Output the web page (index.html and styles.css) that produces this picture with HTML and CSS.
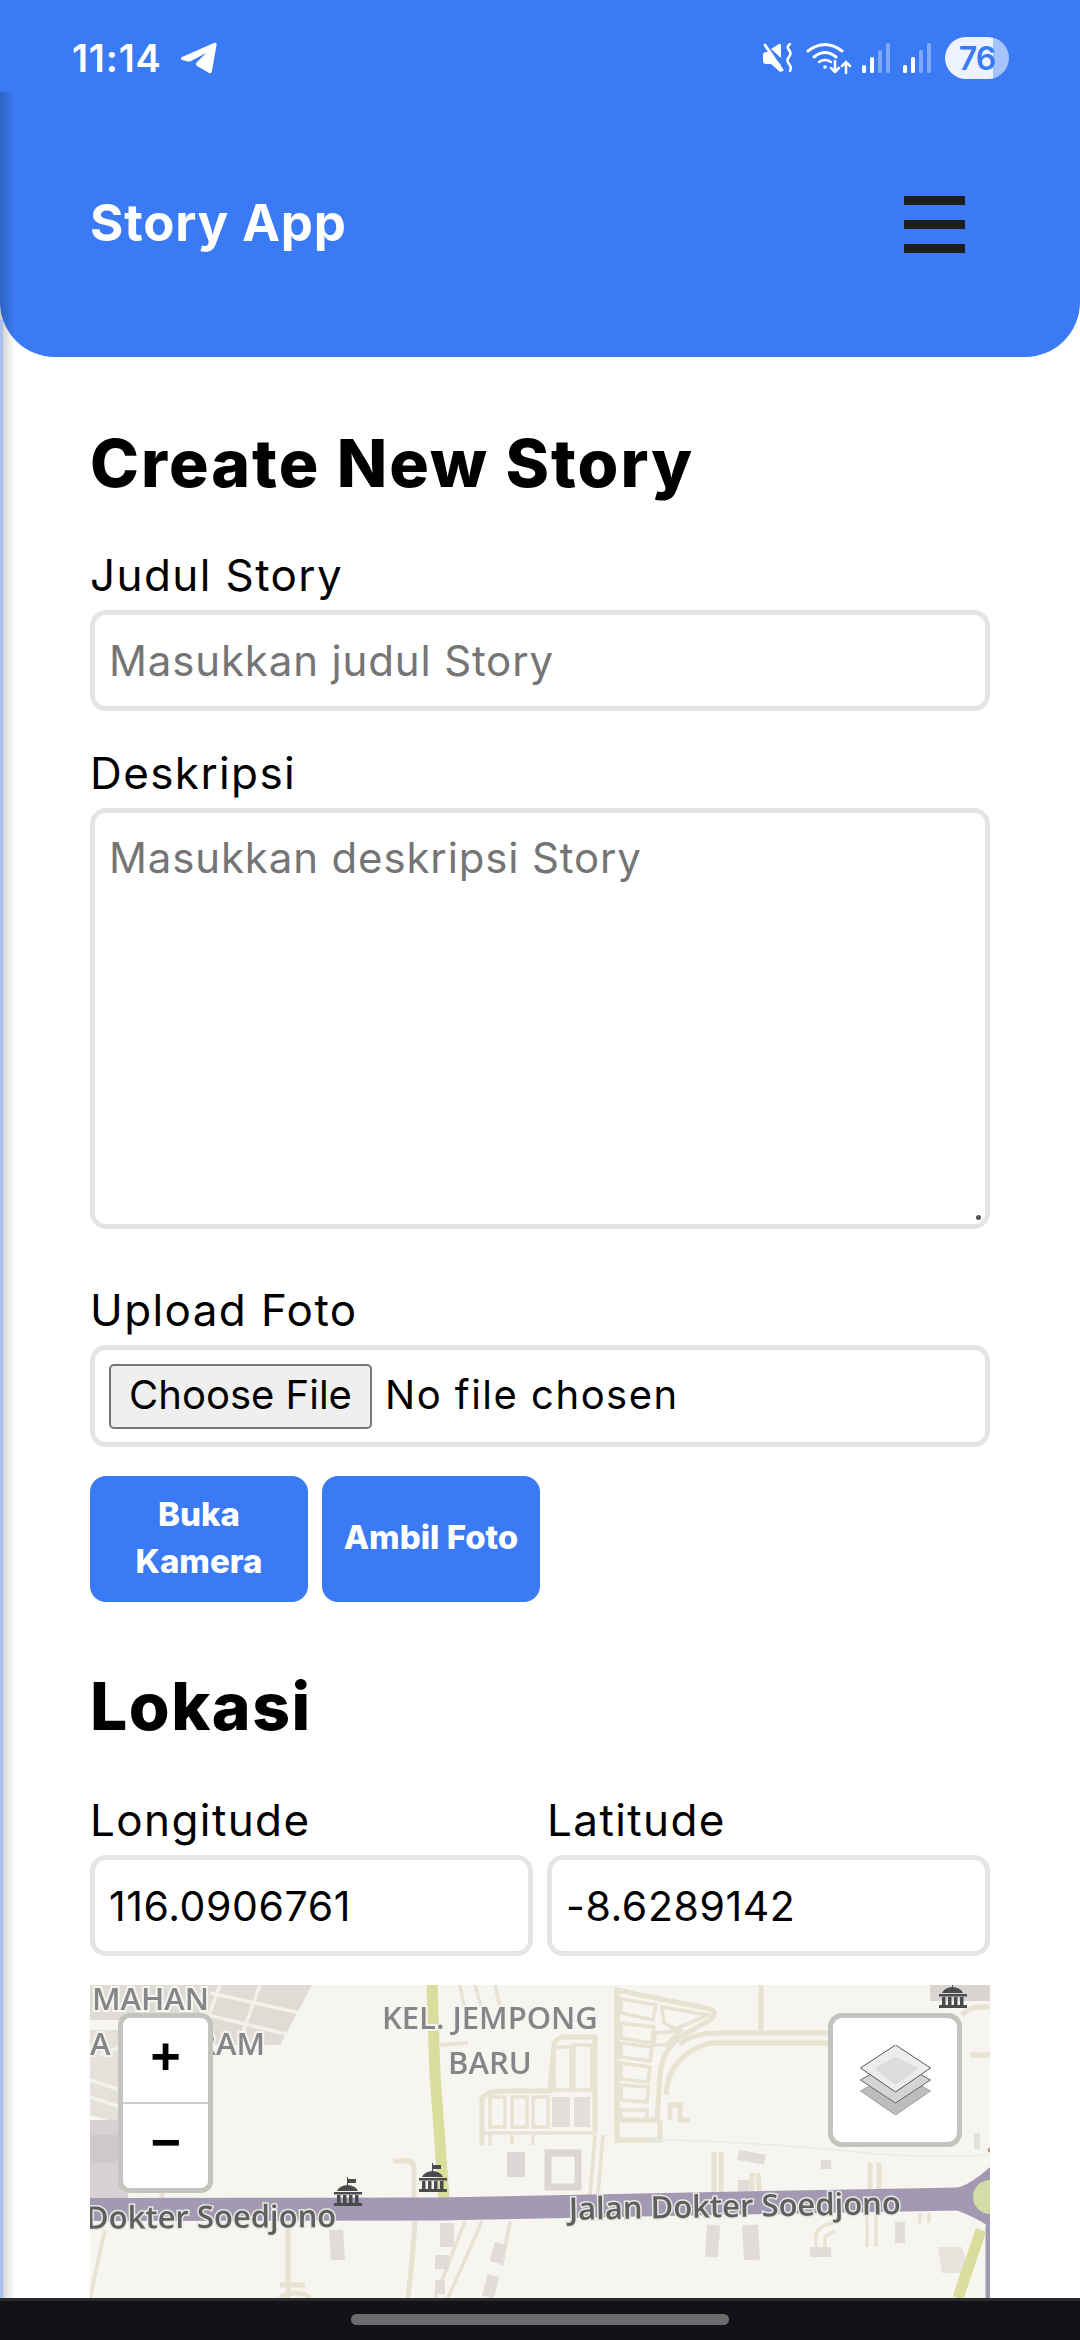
FILE: index.html
```html
<!DOCTYPE html>
<html lang="en">
<head>
  <meta charset="UTF-8">
  <meta name="viewport" content="width=device-width, initial-scale=1.0">
  <title>Story App</title>
  <link rel="stylesheet" href="styles.css">
</head>
<body>
  <header class="app-header">
    <div class="status-bar">
      <div class="status-left">
        <span class="status-time">11:14</span>
        <svg class="tg-icon" viewBox="0 0 36 32"><path d="M1 15 L33 1 Q36 0 35.500 3 L31 29 Q30.500 32 28 31 L16 24 Q14 22 16 20 L25 11 L10 19 Q8 20 5 19 L1 18 Q-1 16 1 15Z" fill="#fff"/></svg>
      </div>
      <div class="status-right">
        <svg class="mute-icon" viewBox="0 0 30 30" fill="#fff">
          <path d="M0 12 Q0 9 3 9 L5 9 L18 22 L18 28 Q18 30 16 28 L8 21 L3 21 Q0 21 0 18Z"/>
          <path d="M8 6 L16 1 Q18 0 18 2 L18 15Z"/>
          <path d="M2 2 L19 27" stroke="#fff" stroke-width="3" stroke-linecap="round"/>
          <path d="M27 1 Q23 4 26 7 Q29 10 26 14 Q23 17 26 21 Q29 24 27 28" fill="none" stroke="#fff" stroke-width="2.500" stroke-linecap="round"/>
        </svg>
        <svg class="wifi-icon" viewBox="0 0 46 32" fill="none" stroke="#fff" stroke-linecap="round">
          <path d="M2 9 Q19 -4 36 9" stroke-width="3"/>
          <path d="M8 15 Q19 6 30 15" stroke-width="3"/>
          <path d="M13 20 Q19 16 25 20" stroke-width="2.500"/>
          <circle cx="19" cy="25" r="1.800" fill="#fff" stroke="none"/>
          <path d="M29 19 V30 M25 26 L29 30 L33 26" stroke-width="2.500"/>
          <path d="M40 31 V20 M36 24 L40 20 L44 24" stroke-width="2.500"/>
        </svg>
        <svg class="signal-icon" viewBox="0 0 28 30">
          <rect x="0" y="22" width="4" height="8" rx="1.500" fill="#fff"/>
          <rect x="8" y="14" width="4" height="16" rx="1.500" fill="#fff"/>
          <rect x="16" y="7" width="4" height="23" rx="1.500" fill="#fff" fill-opacity=".35"/>
          <rect x="24" y="0" width="4" height="30" rx="1.500" fill="#fff" fill-opacity=".35"/>
        </svg>
        <svg class="signal-icon signal-two" viewBox="0 0 28 30">
          <rect x="0" y="22" width="4" height="8" rx="1.500" fill="#fff"/>
          <rect x="8" y="14" width="4" height="16" rx="1.500" fill="#fff"/>
          <rect x="16" y="7" width="4" height="23" rx="1.500" fill="#fff" fill-opacity=".35"/>
          <rect x="24" y="0" width="4" height="30" rx="1.500" fill="#fff" fill-opacity=".35"/>
        </svg>
        <div class="battery"><span class="battery-level">76</span></div>
      </div>
    </div>
    <nav class="nav-row">
      <span class="brand">Story App</span>
      <button class="menu-btn" aria-label="Menu"><i></i><i></i><i></i></button>
    </nav>
  </header>

  <main class="content">
    <h1 class="page-title">Create New Story</h1>

    <form class="story-form">
      <label class="field-label">Judul Story</label>
      <input class="field-input" type="text" placeholder="Masukkan judul Story">

      <label class="field-label">Deskripsi</label>
      <div class="area-wrap">
        <textarea class="field-input field-area" placeholder="Masukkan deskripsi Story"></textarea>
        <span class="area-grip"></span>
      </div>

      <label class="field-label label-upload">Upload Foto</label>
      <div class="field-input file-box">
        <span class="file-btn">Choose File</span>
        <span class="file-name">No file chosen</span>
      </div>

      <div class="camera-btns">
        <button type="button" class="blue-btn">Buka Kamera</button>
        <button type="button" class="blue-btn">Ambil Foto</button>
      </div>

      <h2 class="section-title">Lokasi</h2>

      <div class="coords">
        <div class="coord">
          <label class="field-label">Longitude</label>
          <input class="field-input" type="text" value="116.0906761">
        </div>
        <div class="coord">
          <label class="field-label">Latitude</label>
          <input class="field-input" type="text" value="-8.6289142">
        </div>
      </div>

      <div class="map">
        <svg class="map-tiles" viewBox="0 0 900 313">
          <defs>
            <g id="monument" fill="#4b4b4d">
              <path d="M13 0 H14 V2 H22 V6 H14 V8 Q22 9 24 14 H3 Q5 9 13 8Z"/>
              <rect x="0" y="15" width="28" height="2.500"/>
              <rect x="3" y="18" width="3.500" height="8"/>
              <rect x="9" y="18" width="3.500" height="8"/>
              <rect x="15" y="18" width="3.500" height="8"/>
              <rect x="21" y="18" width="3.500" height="8"/>
              <rect x="0" y="26" width="28" height="3"/>
            </g>
          </defs>
          <rect width="900" height="313" fill="#f6f5f0"/>

          <g class="blur">
            <!-- housing top left -->
            <path d="M0 0 H222 L190 60 L110 60 L40 35 L0 35Z" fill="#dedcd4"/>
            <path d="M0 45 H60 L120 85 L110 160 L0 130Z" fill="#e4e2d8"/>
            <path d="M130 0 L110 55 M170 0 L150 55 M120 8 L210 28 M110 28 L200 50 M10 70 L60 50 M0 95 L105 130 M0 112 L100 145" class="road-pale"/>
            <rect x="0" y="135" width="38" height="78" fill="#d5d2d1"/>
            <rect x="0" y="150" width="38" height="28" fill="#cdcac9"/>

            <!-- roads left of the green one -->
            <path d="M303 176 H318 Q324 176 324 184 V213" class="road"/>
            <path d="M72 213 V200 M198 236 V313" class="road"/>
            <path d="M325 236 Q322 280 318 313 M345 0" class="road"/>
            <path d="M345 313 L375 236 M358 313 L392 236 M412 280 L420 236" class="road-thin"/>
            <path d="M370 0 L375 25 M385 0 L392 25 M405 0 L412 30 M350 60 L378 58" class="road-thin"/>
            <path d="M0 313 L15 245" class="road-thin"/>
            <path d="M190 313 Q195 308 205 308 Q215 308 220 313 M190 300 L215 300" class="road"/>
            <rect x="240" y="245" width="14" height="30" fill="#dfdcda" transform="rotate(-4 247 260)"/>
            <rect x="350" y="238" width="14" height="24" fill="#dfdcda"/>
            <rect x="345" y="270" width="14" height="14" fill="#dfdcda"/>
            <rect x="345" y="295" width="10" height="14" fill="#dfdcda"/>
            <rect x="395" y="290" width="12" height="22" fill="#dfdcda" transform="rotate(15 400 300)"/>
            <rect x="402" y="258" width="12" height="20" fill="#dfdcda" transform="rotate(15 408 268)"/>

            <!-- green path -->
            <path d="M342 0 L345 90 L354 213" class="green"/>

            <!-- block row middle -->
            <path d="M392 160 V115 Q392 108 410 106 H460 L464 60 Q464 55 472 52 H505 V148" class="road"/>
            <path d="M400 112 H415 V142 H400Z M422 112 H437 V142 H422Z M443 112 H458 V142 H443Z M464 62 H481 V105 H464Z M484 60 H502 V105 H484Z" class="road-thin"/>
            <path d="M400 150 V160 M422 150 V160 M443 150 V160 M392 148 H505" class="road-thin"/>
            <rect x="462" y="112" width="18" height="30" fill="#e3e0da"/>
            <rect x="484" y="112" width="16" height="30" fill="#e3e0da"/>
            <rect x="417" y="167" width="18" height="25" fill="#dad7d6"/>
            <rect x="458" y="168" width="30" height="34" fill="none" stroke="#d9d6d4" stroke-width="7"/>
            <path d="M505 150 L500 210 M513 150 L508 210" class="road-thin"/>

            <!-- right housing -->
            <path d="M527 5 L620 24 Q630 28 618 36 L590 52 Q572 66 570 90 L567 135 H527Z" class="road"/>
            <path d="M531 14 L566 20 L563 35 L531 28Z M531 38 L564 42 L562 58 L531 53Z M531 58 L562 62 L560 76 L531 72Z M531 78 L560 82 L558 97 L531 94Z M531 100 L558 102 L557 117 L531 115Z M531 125 L557 125 L557 135 L531 135Z" class="road-thin"/>
            <path d="M572 22 L618 30 L585 44 L574 38Z M565 48 L590 46 L576 60 L564 60Z" class="road-thin"/>
            <path d="M527 5 V158 M570 135 V155 H527" class="road"/>
            <path d="M590 60 Q600 48 630 48 H738 M576 110 Q578 70 620 58 H738 M671 0 V45" class="road"/>
            <path d="M580 135 V120 H590 V135 H600" class="road"/>
            <rect x="840" y="0" width="60" height="16" fill="#d8d5d3"/>
            <path d="M872 30 Q880 20 900 22 M880 70 H900" class="road"/>
            <path d="M560 155 Q650 155 800 170 Q860 172 900 170" stroke="#e2eee4" stroke-width="1.500" fill="none"/>
            <rect x="648" y="167" width="27" height="10" fill="#dfdcda" transform="rotate(10 660 172)"/>
            <rect x="731" y="175" width="10" height="9" fill="#dfdcda"/>
            <rect x="648" y="195" width="11" height="12" fill="#dfdcda"/>
            <rect x="884" y="148" width="6" height="16" fill="#e2e0da"/>
            <path d="M624 212 V167 M631 212 V167 M662 212 L662 188 M670 212 L668 188 M780 208 V178 M789 208 V178" class="road"/>
            <path d="M830 228 V238 M839 228 V238 M777 228 V262 M786 228 V262 M726 266 V250 Q726 245 735 240 L743 238 M735 266 V252 Q736 250 745 246" class="road-thin"/>
            <rect x="616" y="240" width="13" height="32" fill="#dfdcda" transform="rotate(4 622 256)"/>
            <rect x="653" y="240" width="16" height="35" fill="#dfdcda" transform="rotate(-3 660 256)"/>
            <rect x="720" y="262" width="21" height="10" fill="#dfdcda"/>
            <rect x="805" y="237" width="10" height="21" fill="#dfdcda"/>
            <path d="M848 262 H872 L880 288 H852Z" fill="#e6e4dc"/>

            <!-- road -->
            <path d="M0 224.500 L350 224 L700 217 L870 214" class="main-road"/>
            <path d="M898 240 V313" stroke="#a29ab3" stroke-width="5" fill="none"/>
            <path d="M891 245 L868 313" class="green"/>
            <path d="M866 203 Q880 200 900 182 V242 Q885 232 866 225Z" fill="#a29ab3"/>
            <circle cx="900" cy="212" r="17" fill="#d2dda7"/>
            <circle cx="900" cy="165" r="2.500" fill="#c89a80"/>

            <!-- labels -->
            <text class="map-label" x="2" y="25">MAHAN</text>
            <text class="map-label" x="0" y="70">A M</text>
            <text class="map-label" x="175" y="70" text-anchor="end">RAM</text>
            <text class="map-label" x="292" y="44">KEL. JEMPONG</text>
            <text class="map-label" x="358" y="89">BARU</text>
            <text class="road-label" x="-4" y="243" transform="rotate(-.4 100 240)">Dokter Soedjono</text>
            <text class="road-label" x="479" y="232" transform="rotate(-1 640 230)">Jalan Dokter Soedjono</text>

            <use href="#monument" x="244" y="192"/>
            <use href="#monument" x="329" y="178"/>
            <use href="#monument" x="849" y="-6"/>
          </g>
        </svg>

        <div class="zoom-ctrl">
          <a class="zoom-btn">+</a>
          <a class="zoom-btn">−</a>
        </div>

        <div class="layers-ctrl">
          <svg viewBox="0 0 70 70" class="layers-icon">
            <path d="M0 46 L35 26 L70 46 L35 70Z" fill="#bdbdbd" stroke="#8f8f8f" stroke-width=".800"/>
            <path d="M0 35 L35 15 L70 35 L35 58Z" fill="#d4d4d4" stroke="#666" stroke-width="1"/>
            <path d="M0 23 L35 0 L70 23 L35 47Z" fill="#ededed" stroke="#555" stroke-width="1"/>
            <path d="M14 23 L35 12 L58 23 L35 40Z" fill="#dcdcdc"/>
          </svg>
        </div>
      </div>
    </form>
  </main>

  <div class="bottom-bar"><span class="home-pill"></span></div>
</body>
</html>
```

FILE: styles.css
```css
html, body {
  margin: 0;
  padding: 0;
  height: 2340px;
  overflow: hidden;
}
body {
  font-family: "Inter", "Liberation Sans", sans-serif;
  background: #fff;
  color: #000;
  position: relative;
}
/* drawer edge peeking in on the left */
body::before {
  content: "";
  position: absolute;
  left: 0;
  top: 92px;
  bottom: 0;
  width: 15px;
  z-index: 5;
  background: linear-gradient(to right, rgba(0, 0, 0, .2), rgba(0, 0, 0, 0));
}
body::after {
  content: "";
  position: absolute;
  left: 0;
  top: 320px;
  bottom: 0;
  width: 3px;
  z-index: 5;
  background: #a9bfe9;
}

/* header */
.app-header {
  background: #3a7af5;
  height: 357px;
  border-radius: 0 0 55px 55px;
  color: #fff;
}
.status-bar {
  height: 92px;
  box-sizing: border-box;
  padding: 24px 71px 0 72px;
  display: flex;
  justify-content: space-between;
  align-items: center;
}
.status-left {
  display: flex;
  align-items: center;
  gap: 19px;
}
.status-time {
  font-size: 38px;
  font-weight: 600;
  letter-spacing: .8px;
}
.tg-icon {
  width: 36px;
  height: 32px;
}
.status-right {
  display: flex;
  align-items: center;
}
.mute-icon {
  width: 30px;
  height: 30px;
  margin-right: 13px;
}
.wifi-icon {
  width: 46px;
  height: 32px;
  margin-right: 10px;
}
.signal-icon {
  width: 28px;
  height: 30px;
  margin-right: 13px;
}
.signal-two {
  margin-right: 14px;
}
.battery {
  width: 64px;
  height: 42px;
  border-radius: 21px;
  background: linear-gradient(to right, #edf3fe 48px, #a6c4fb 48px);
  display: flex;
  align-items: center;
  justify-content: center;
}
.battery-level {
  font-size: 32px;
  font-weight: 600;
  color: #3a7af5;
  letter-spacing: -1px;
}
.nav-row {
  height: 265px;
  box-sizing: border-box;
  padding: 0 115px 0 90px;
  display: flex;
  justify-content: space-between;
  align-items: center;
}
.brand {
  font-size: 51px;
  font-weight: 700;
  letter-spacing: .8px;
  padding-bottom: 4px;
}
.menu-btn {
  width: 61px;
  padding: 0;
  border: none;
  background: none;
  display: flex;
  flex-direction: column;
  gap: 15px;
}
.menu-btn i {
  display: block;
  height: 9px;
  background: #1a1f1c;
}

/* form */
.content {
  padding: 0 90px;
}
.page-title {
  margin: 68px 0 12px;
  font-size: 66px;
  line-height: 76px;
  font-weight: 800;
  letter-spacing: 2px;
}
.story-form {
  display: flex;
  flex-direction: column;
}
.field-label {
  display: block;
  font-size: 44px;
  line-height: 60px;
  height: 60px;
  margin: 32px 0 5px;
  letter-spacing: 1.400px;
}
.label-upload {
  margin-top: 51px;
}
.field-input {
  display: block;
  width: 100%;
  box-sizing: border-box;
  height: 101px;
  border: 5px solid #e5e5e5;
  border-radius: 16px;
  padding: 0 14px;
  font-family: "Inter", "Liberation Sans", sans-serif;
  font-size: 41px;
  letter-spacing: .6px;
  color: #000;
  background: #fff;
  outline: none;
}
.field-input::placeholder {
  color: #757575;
  opacity: 1;
  font-size: 42px;
  letter-spacing: .85px;
}
.area-wrap {
  position: relative;
}
.field-area {
  height: 421px;
  padding-top: 19px;
  resize: none;
}
.area-grip {
  position: absolute;
  right: 9px;
  bottom: 9px;
  width: 5px;
  height: 5px;
  border-radius: 50%;
  background: #555;
}
.file-box {
  display: flex;
  align-items: center;
  height: 102px;
  gap: 13px;
  letter-spacing: 0;
}
.file-btn {
  box-sizing: border-box;
  width: 263px;
  height: 65px;
  padding-bottom: 3px;
  border: 2px solid #767676;
  border-radius: 5px;
  background: #efefef;
  display: flex;
  align-items: center;
  justify-content: center;
  font-size: 40px;
}
.file-name {
  font-size: 40px;
  letter-spacing: 1.500px;
  padding-bottom: 3px;
}
.camera-btns {
  display: flex;
  gap: 14px;
  margin-top: 29px;
}
.blue-btn {
  width: 218px;
  height: 126px;
  padding: 0 20px 3px;
  border: none;
  border-radius: 16px;
  background: #3a7af5;
  color: #fff;
  font-family: "Inter", "Liberation Sans", sans-serif;
  font-size: 33px;
  line-height: 47px;
  font-weight: 800;
}
.section-title {
  margin: 66px 0 0;
  font-size: 66px;
  line-height: 76px;
  font-weight: 800;
  letter-spacing: 1.500px;
}
.coords {
  display: flex;
  gap: 14px;
  margin-top: 14px;
}
.coord {
  flex: 1;
}
.map {
  position: relative;
  height: 313px;
  margin-top: 29px;
  overflow: hidden;
}
.map-tiles {
  display: block;
  width: 100%;
  height: 100%;
}
.blur {
  filter: blur(.7px);
}
.road {
  fill: none;
  stroke: #e6e3d2;
  stroke-width: 5;
}
.road-thin {
  fill: none;
  stroke: #e6e3d2;
  stroke-width: 3.500;
}
.road-pale {
  fill: none;
  stroke: #f2f1ea;
  stroke-width: 3.500;
}
.green {
  fill: none;
  stroke: #d9de9c;
  stroke-width: 11;
}
.main-road {
  fill: none;
  stroke: #a29ab3;
  stroke-width: 23;
}
.map-label {
  font-family: "Open Sans", sans-serif;
  font-size: 31px;
  font-weight: 600;
  fill: #85858a;
  stroke: #f6f5f0;
  stroke-width: 4;
  paint-order: stroke;
}
.road-label {
  font-family: "Open Sans", sans-serif;
  font-size: 31px;
  font-weight: 600;
  fill: #5f5f5f;
  stroke: #e9e8e2;
  stroke-width: 3;
  paint-order: stroke;
}
.zoom-ctrl {
  position: absolute;
  left: 28px;
  top: 28px;
  width: 85px;
  border: 5px solid #c3c3bf;
  border-radius: 12px;
  background: #fff;
  overflow: hidden;
}
.zoom-btn {
  display: flex;
  align-items: center;
  justify-content: center;
  height: 84px;
  font-family: "Liberation Mono", monospace;
  font-size: 52px;
  font-weight: 700;
}
.zoom-btn + .zoom-btn {
  border-top: 2px solid #ccc;
}
.layers-ctrl {
  position: absolute;
  left: 738px;
  top: 28px;
  width: 124px;
  height: 124px;
  border: 5px solid #c3c3bf;
  border-radius: 14px;
  background: #fff;
  display: flex;
  align-items: center;
  justify-content: center;
}
.layers-icon {
  width: 73px;
  height: 70px;
}

/* android nav bar */
.bottom-bar {
  position: absolute;
  left: 0;
  right: 0;
  bottom: 0;
  height: 42px;
  box-sizing: border-box;
  border-top: 3px solid #2a2a2e;
  background: #131317;
  display: flex;
  justify-content: center;
  padding-top: 13px;
  z-index: 6;
}
.home-pill {
  width: 378px;
  height: 11px;
  border-radius: 6px;
  background: #6c6c6e;
}
```
